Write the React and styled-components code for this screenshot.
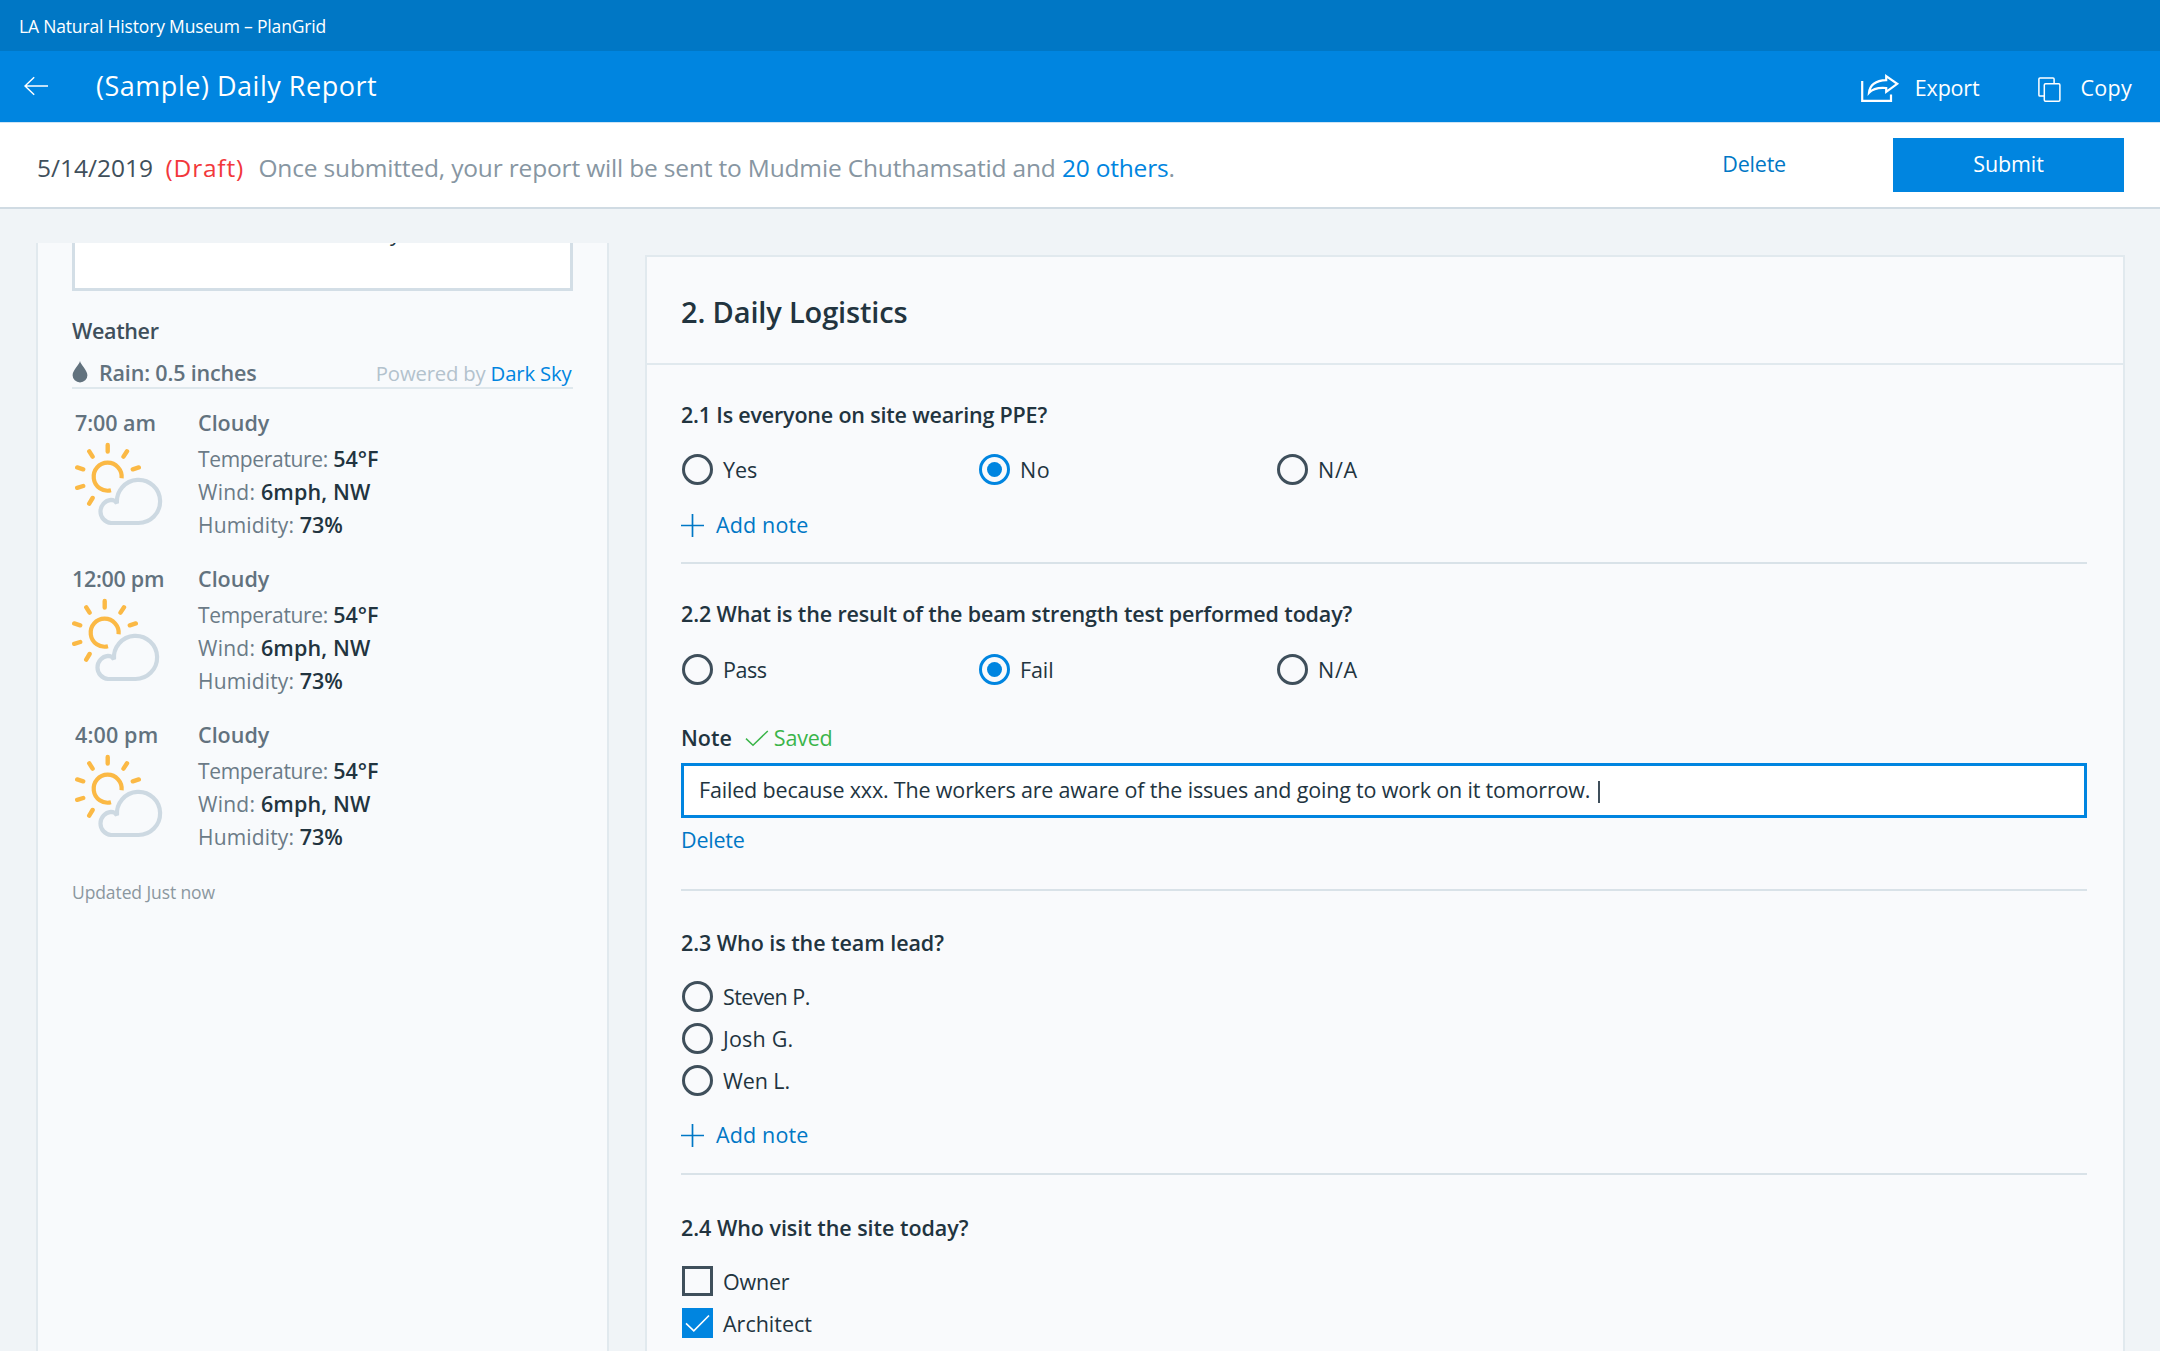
import React from "react";
import styled, { createGlobalStyle, css } from "styled-components";

const Global = createGlobalStyle`
  * { box-sizing: border-box; }
  html, body { margin: 0; padding: 0; }
  body {
    font-family: "Open Sans", "Noto Sans", sans-serif;
    font-size: 21.5px;
    line-height: 30px;
    color: #22343f;
    background: #f0f4f7;
    -webkit-font-smoothing: antialiased;
  }
  h1, h2, h3, p { margin: 0; font-weight: 400; }
  button { font: inherit; border: 0; padding: 0; background: none; text-align: left; }
`;

const Page = styled.div`
  display: flex;
  flex-direction: column;
  height: 1351px;
  overflow: hidden;
`;

const T = styled.span`
  letter-spacing: ${(p) => p.$ls || 0}px;
  white-space: pre;
`;

const ProjectBar = styled.div`
  flex: none;
  height: 51px;
  padding: 11px 0 0 19px;
  background: #0077c5;
  color: #fff;
  font-size: 17.5px;
`;

const Header = styled.header`
  flex: none;
  display: flex;
  height: 71px;
  padding: 0 28px 0 24px;
  background: #0085e0;
  color: #fff;
`;

const BackButton = styled.button`
  width: 25px;
  height: 20px;
  margin-top: 25px;
  svg { display: block; }
`;

const Title = styled.h1`
  flex: 1;
  margin: 15px 0 0 47px;
  font-size: 27px;
  line-height: 40px;
`;

const HeaderAction = styled.button`
  display: flex;
  align-items: flex-start;
  color: #fff;
  margin-left: ${(p) => p.$gap || 0}px;
  padding-top: 22px;
  svg { display: block; margin: ${(p) => p.$icon}; }
`;

const StatusBar = styled.div`
  flex: none;
  display: flex;
  height: 87px;
  padding: 0 36px 0 37px;
  background: #fff;
  border-top: 1px solid #cfe4f4;
  border-bottom: 2px solid #d0dbe3;
`;

const StatusText = styled.p`
  flex: 1;
  padding-top: 27px;
  font-size: 24.5px;
  line-height: 36px;
  color: #8796a2;
`;

const DateText = styled(T)` color: #3f4f5b; `;
const Draft = styled(T)`
  margin: 0 14.5px 0 12.5px;
  font-weight: 500;
  color: #f2383b;
`;
const Link = styled(T)` color: #0085e0; `;

const DeleteAction = styled.button`
  margin: 26px 107px 0 0;
  height: 30px;
  color: #0077c5;
`;

const SubmitButton = styled.button`
  width: 231px;
  height: 54px;
  margin-top: 15px;
  padding-bottom: 2px;
  background: #0085e0;
  color: #fff;
  text-align: center;
`;

const Body = styled.div`
  flex: 1;
  min-height: 0;
  display: flex;
  align-items: stretch;
  padding: 34px 36px 0 36px;
`;

const Sidebar = styled.aside`
  width: 573px;
  flex: none;
  padding: 0 35px 0 34px;
  background: #f8fafc;
  border: solid #e1e9ee;
  border-width: 0 2px;
  overflow: hidden;
`;

const SummaryField = styled.div`
  height: 48px;
  margin: 0 -1px 0 0;
  padding-left: 14px;
  border: 3px solid #d3dee6;
  border-top: 0;
  background: #fff;
  overflow: hidden;
`;

const SummaryLine = styled.p`
  margin: -25px 0 0 301px;
`;

const WeatherHeading = styled.h2`
  margin-top: 25px;
  font-size: 21.5px;
  line-height: 30px;
  font-weight: 600;
  color: #3f4f5b;
`;

const RainRow = styled.div`
  display: flex;
  align-items: flex-start;
  height: 43px;
  margin: 0 -1px 0 0;
  padding-top: 12px;
  border-bottom: 2px solid #dfe8ed;
  color: #62727e;
  font-weight: 600;
  svg { display: block; margin: 3px 11px 0 0; }
`;

const Credit = styled.span`
  margin-left: auto;
  padding-right: 1.5px;
  font-size: 20.3px;
  font-weight: 400;
  color: #b3c2cd;
`;

const Forecast = styled.section`
  display: flex;
  height: 156px;
  padding-top: 19px;
`;

const ForecastTime = styled.div`
  width: 126px;
  padding-left: ${(p) => p.$indent}px;
  font-weight: 600;
  color: #62727e;
  svg { display: block; margin-top: 4px; }
`;

const ForecastDetail = styled.div` flex: 1; `;

const Condition = styled.p`
  && { font-weight: 600; }
  margin-bottom: 4px;
  color: #62727e;
`;

const Reading = styled.p`
  height: 33px;
  padding-top: 2px;
  color: #6b7b87;
`;

const ReadingLabel = styled(T)` font-size: 21px; `;
const Value = styled(T)` color: #22343f; font-weight: 600; `;

const Updated = styled.p`
  margin-top: 20px;
  font-size: 17.5px;
  color: #8b979f;
`;

const Card = styled.main`
  width: 1480px;
  flex: none;
  margin: 12px 0 0 36px;
  background: #f9fafc;
  border: solid #e1e9ee;
  border-width: 2px 2px 0 2px;
`;

const SectionTitle = styled.h2`
  height: 108px;
  padding: 35px 34px 0;
  border-bottom: 2px solid #e1e9ee;
  font-size: 29px;
  line-height: 40px;
  font-weight: 600;
`;

const Question = styled.section`
  margin: 0 36px 0 34px;
  padding: ${(p) => p.$top}px 0 ${(p) => p.$bottom}px;
  border-bottom: 2px solid #d9e2e8;
`;

const Prompt = styled.h3`
  margin-bottom: ${(p) => p.$gap}px;
  font-size: 21.5px;
  line-height: 30px;
  font-weight: 600;
`;

const OptionRow = styled.div`
  display: grid;
  grid-template-columns: 297px 298px 297px;
`;

const OptionList = styled.div`
  display: grid;
  gap: 12px;
`;

const Option = styled.label`
  display: flex;
  height: 30px;
  padding-left: 1px;
  gap: 10px;
`;

const OptionLabel = styled(T)` padding-top: 1px; `;

const Radio = styled.span`
  display: flex;
  align-items: center;
  justify-content: center;
  width: 31px;
  height: 31px;
  border: 3px solid ${(p) => (p.$on ? "#0085e0" : "#3f4f5b")};
  border-radius: 50%;
  &::after {
    content: "";
    width: 15px;
    height: 15px;
    border-radius: 50%;
    background: ${(p) => (p.$on ? "#0085e0" : "transparent")};
  }
`;

const Checkbox = styled.span`
  width: 31px;
  height: 30px;
  ${(p) => p.$on ? css`background: #0085e0;` : css`border: 3px solid #3f4f5b;`}
  svg { display: block; }
`;

const AddNoteButton = styled.button`
  display: flex;
  align-items: center;
  height: 30px;
  margin-top: ${(p) => p.$top}px;
  gap: 12px;
  color: #0077c5;
`;

const NoteHeader = styled.div`
  display: flex;
  height: 30px;
  margin: 39px 0 10px;
  font-weight: 600;
`;

const Saved = styled.span`
  display: flex;
  gap: 5px;
  margin-left: 13px;
  font-weight: 400;
  color: #3bb54a;
  svg { display: block; margin-top: 7px; }
`;

const NoteInput = styled.div`
  display: flex;
  height: 55px;
  padding: 9px 15px 0;
  background: #fff;
  border: 3px solid #0085e0;
`;

const Caret = styled.span`
  width: 2px;
  height: 22px;
  margin: 6px 0 0 8px;
  background: #3f4f5b;
`;

const DeleteNote = styled.button`
  display: block;
  height: 30px;
  margin-top: 7px;
  color: #0077c5;
`;

const BackIcon = () => (
  <svg width="25" height="20" viewBox="0 0 25 20" fill="none" stroke="#fff" strokeWidth="1.5">
    <path d="M24 10H1M10.2 1.2L1 10l9.2 8.8" />
  </svg>
);

const ExportIcon = () => (
  <svg width="39" height="29" viewBox="0 0 39 29" fill="none" stroke="#fff" strokeWidth="2.2">
    <path d="M1.2 7V26.8H30V20.5" />
    <path d="M25.2 2.2L36.2 9.8L25.2 17.8V14C16.5 13.2 11.5 15 8 18.8C9 10.2 15 6.6 25.2 6.2Z" />
  </svg>
);

const CopyIcon = () => (
  <svg width="24" height="26" viewBox="0 0 24 26" fill="none" stroke="#fff" strokeWidth="1.5">
    <path d="M6.3 19H2Q.9 19 .9 17.9V2.1Q.9 1 2 1H15Q16.1 1 16.1 2.1V6.6" />
    <rect x="6.3" y="6.8" width="15.6" height="17.4" rx="1.2" />
  </svg>
);

const DropIcon = () => (
  <svg width="16" height="22" viewBox="0 0 16 22" fill="#62727e">
    <path d="M8 0C8.6 3.6 15.4 9.3 15.4 14.2A7.4 7.2 0 0 1 .6 14.2C.6 9.3 7.4 3.6 8 0Z" />
  </svg>
);

const PartlyCloudyIcon = () => (
  <svg width="88" height="85" viewBox="0 0 88 85" fill="none">
    <g stroke="#fbb945" strokeWidth="4.4">
      <path d="M46.6 36.2A14 14 0 1 0 36 48.3" strokeWidth="4.2" />
      <path
        strokeLinecap="round"
        d="M32.7 3V9.6M14.3 9.3L17.6 14.6M52 9.3L48.5 14.6M2.2 25.4L8.2 27.3M63.8 25.4L57.8 27.3M2.2 45.8L8.2 44M17.6 56L14.2 61.6"
      />
    </g>
    <path
      stroke="#cdd9e2"
      strokeWidth="4.2"
      d="M36 81H63.3A21.6 21.6 0 1 0 42 61.4C40.5 58.9 38 57.9 36 57.9A11.6 11.6 0 0 0 36 81Z"
    />
  </svg>
);

const PlusIcon = () => (
  <svg width="23" height="23" viewBox="0 0 23 23" fill="none" stroke="#0077c5" strokeWidth="1.7">
    <path d="M0 11.5H23M11.5 0V23" />
  </svg>
);

const SavedIcon = () => (
  <svg width="24" height="17" viewBox="0 0 24 17" fill="none" stroke="#3bb54a" strokeWidth="1.5">
    <path d="M1 8.6L8 15.2L22.8 1" />
  </svg>
);

const BoxCheckIcon = () => (
  <svg width="31" height="30" viewBox="0 0 31 30" fill="none" stroke="#fff" strokeWidth="1.6">
    <path d="M4 15.3L11.8 22.8L27 7.5" />
  </svg>
);

const RadioOption = ({ label, on, ls }) => (
  <Option>
    <Radio $on={on} />
    <OptionLabel $ls={ls}>{label}</OptionLabel>
  </Option>
);

const CheckOption = ({ label, on, ls }) => (
  <Option>
    <Checkbox $on={on}>{on && <BoxCheckIcon />}</Checkbox>
    <OptionLabel $ls={ls}>{label}</OptionLabel>
  </Option>
);

const AddNote = ({ top = 25 }) => (
  <AddNoteButton $top={top}>
    <PlusIcon />
    <T $ls={0.15}>Add note</T>
  </AddNoteButton>
);

const forecasts = [
  { time: "7:00 am", indent: 3, ls: -0.05 },
  { time: "12:00 pm", indent: 0, ls: -0.3 },
  { time: "4:00 pm", indent: 3, ls: 0.15 },
];

export default function App() {
  return (
    <>
      <Global />
      <Page>
        <ProjectBar><T $ls={-0.17}>LA Natural History Museum – PlanGrid</T></ProjectBar>
        <Header>
          <BackButton><BackIcon /></BackButton>
          <Title><T $ls={0.52}>(Sample) Daily Report</T></Title>
          <HeaderAction $icon="1px 15px 0 0"><ExportIcon /><T $ls={-0.2}>Export</T></HeaderAction>
          <HeaderAction $gap={59} $icon="4px 18px 0 0"><CopyIcon /><T $ls={0.3}>Copy</T></HeaderAction>
        </Header>
        <StatusBar>
          <StatusText>
            <DateText>5/14/2019</DateText>
            <Draft $ls={0.8}>(Draft)</Draft>
            <T $ls={-0.17}>Once submitted, your report will be sent to Mudmie Chuthamsatid and </T>
            <Link $ls={-0.2}>20 others</Link>.
          </StatusText>
          <DeleteAction><T $ls={-0.2}>Delete</T></DeleteAction>
          <SubmitButton><T $ls={-0.1}>Submit</T></SubmitButton>
        </StatusBar>
        <Body>
          <Sidebar>
            <SummaryField><SummaryLine>y</SummaryLine></SummaryField>
            <WeatherHeading><T $ls={-0.35}>Weather</T></WeatherHeading>
            <RainRow>
              <DropIcon />
              <T $ls={-0.17}>Rain: 0.5 inches</T>
              <Credit><T $ls={-0.18}>Powered by </T><Link $ls={-0.15}>Dark Sky</Link></Credit>
            </RainRow>
            {forecasts.map((f) => (
              <Forecast key={f.time}>
                <ForecastTime $indent={f.indent}>
                  <T $ls={f.ls}>{f.time}</T>
                  <PartlyCloudyIcon />
                </ForecastTime>
                <ForecastDetail>
                  <Condition><T>Cloudy</T></Condition>
                  <Reading><ReadingLabel $ls={-0.33}>Temperature: </ReadingLabel><Value>54°F</Value></Reading>
                  <Reading><ReadingLabel $ls={0.25}>Wind: </ReadingLabel><Value $ls={0.15}>6mph, NW</Value></Reading>
                  <Reading><ReadingLabel $ls={0.15}>Humidity: </ReadingLabel><Value>73%</Value></Reading>
                </ForecastDetail>
              </Forecast>
            ))}
            <Updated><T $ls={-0.1}>Updated Just now</T></Updated>
          </Sidebar>
          <Card>
            <SectionTitle><T $ls={-0.15}>2. Daily Logistics</T></SectionTitle>
            <Question $top={35} $bottom={22}>
              <Prompt $gap={24}><T $ls={-0.19}>2.1 Is everyone on site wearing PPE?</T></Prompt>
              <OptionRow>
                <RadioOption label="Yes" ls={-0.1} />
                <RadioOption label="No" on ls={0.6} />
                <RadioOption label="N/A" ls={0.7} />
              </OptionRow>
              <AddNote top={26} />
            </Question>
            <Question $top={35} $bottom={34}>
              <Prompt $gap={25}><T $ls={-0.15}>2.2 What is the result of the beam strength test performed today?</T></Prompt>
              <OptionRow>
                <RadioOption label="Pass" ls={-0.5} />
                <RadioOption label="Fail" on ls={-0.1} />
                <RadioOption label="N/A" ls={0.7} />
              </OptionRow>
              <NoteHeader>
                <T>Note</T>
                <Saved><SavedIcon /><T $ls={-0.2}>Saved</T></Saved>
              </NoteHeader>
              <NoteInput>
                <T $ls={-0.17}>Failed because xxx. The workers are aware of the issues and going to work on it tomorrow.</T>
                <Caret />
              </NoteInput>
              <DeleteNote><T $ls={-0.2}>Delete</T></DeleteNote>
            </Question>
            <Question $top={37} $bottom={23}>
              <Prompt $gap={23}><T $ls={-0.06}>2.3 Who is the team lead?</T></Prompt>
              <OptionList>
                <RadioOption label="Steven P." ls={-0.55} />
                <RadioOption label="Josh G." ls={0.2} />
                <RadioOption label="Wen L." ls={-0.1} />
              </OptionList>
              <AddNote />
            </Question>
            <Question $top={38} $bottom={23}>
              <Prompt $gap={23}><T $ls={-0.04}>2.4 Who visit the site today?</T></Prompt>
              <OptionList>
                <CheckOption label="Owner" ls={-0.2} />
                <CheckOption label="Architect" on />
              </OptionList>
            </Question>
          </Card>
        </Body>
      </Page>
    </>
  );
}
